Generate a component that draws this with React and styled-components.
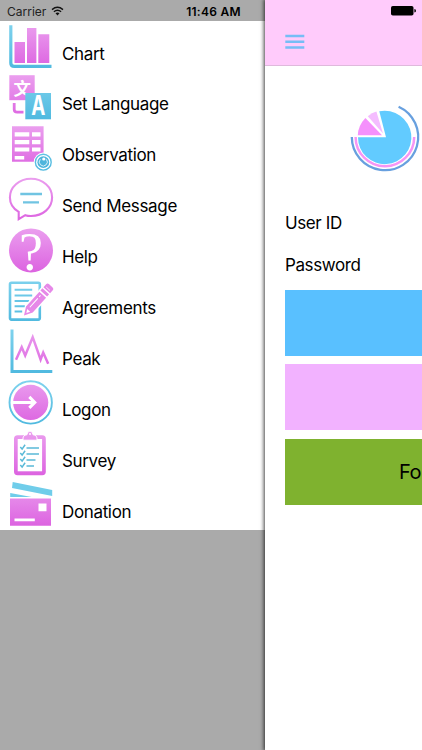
import React from "react";
import styled, { createGlobalStyle } from "styled-components";

const GlobalStyle = createGlobalStyle`
  body {
    margin: 0;
    background: #aaa;
    overflow: hidden;
  }
`;

const Screen = styled.div`
  display: flex;
  width: 422px;
  height: 750px;
  overflow: hidden;
  background: #aaa;
  color: #000;
  font-family: Inter, "Liberation Sans", sans-serif;
`;

const Drawer = styled.aside`
  flex: 0 0 265px;
`;

const StatusBar = styled.div`
  display: flex;
  align-items: center;
  box-sizing: border-box;
  height: 21px;
  padding: 1px 24px 0 7px;
  font-size: 12px;
`;

const Carrier = styled.span`
  color: #222;
  margin-right: 5px;
`;

const Clock = styled.span`
  margin-left: auto;
  font-weight: 600;
  letter-spacing: 0.3px;
`;

const Menu = styled.ul`
  list-style: none;
  margin: 0;
  padding: 0;
  background: #fff;
`;

const MenuItem = styled.li`
  display: flex;
  height: 50.9px;
`;

const MenuIcon = styled.svg`
  flex: none;
  width: 62px;
  height: 50.9px;
  overflow: visible;
`;

const MenuLabel = styled.span`
  padding-top: 21.5px;
  font-size: 17px;
  letter-spacing: -0.35px;
  line-height: 22px;
  white-space: nowrap;
`;

const Page = styled.main`
  flex: 0 0 422px;
  background: #fff;
  box-shadow: 0 0 4px 1px rgba(0, 0, 0, 0.75);
`;

const Header = styled.header`
  display: flex;
  justify-content: space-between;
  box-sizing: border-box;
  height: 66px;
  padding: 6px 271px 0 20px;
  background: #ffcbfb;
  border-bottom: 1px solid #dfb9dc;
`;

const Burger = styled.svg`
  width: 20px;
  height: 16px;
  margin-top: 28px;
`;

const Content = styled.div`
  padding: 34px 20px 0;
`;

const Logo = styled.svg`
  display: block;
  width: 80px;
  height: 76px;
  margin-left: 60px;
`;

const Field = styled.div`
  height: 41.5px;
  font-size: 17px;
  letter-spacing: -0.4px;
  line-height: 22px;
`;

const Form = styled.div`
  padding-top: 36px;
`;

const Buttons = styled.div`
  display: grid;
  gap: 8.3px;
  margin-top: -5px;
`;

const Button = styled.button`
  height: 66px;
  padding: 0 0 0 114px;
  border: 0;
  background: ${(props) => props.$color};
  color: #000;
  font-family: inherit;
  font-size: 20px;
  letter-spacing: -0.4px;
  text-align: left;
`;

const Defs = styled.svg`
  position: absolute;
  width: 0;
  height: 0;
`;

const PINK = "url(#pink)";
const BLUE = "url(#blue)";

const Gradients = () => (
  <Defs>
    <defs>
      <linearGradient id="pink" gradientUnits="userSpaceOnUse" x1="0" y1="2" x2="0" y2="48">
        <stop offset="0" stopColor="#eba0ef" />
        <stop offset="1" stopColor="#dc62e0" />
      </linearGradient>
      <linearGradient id="blue" gradientUnits="userSpaceOnUse" x1="0" y1="2" x2="0" y2="48">
        <stop offset="0" stopColor="#80d3ee" />
        <stop offset="1" stopColor="#4fb9df" />
      </linearGradient>
    </defs>
  </Defs>
);

const ChartIcon = () => (
  <>
    <path d="M10.8 4.2V42q0 3.4 3.4 3.4H51.5" fill="none" stroke={BLUE} strokeWidth="3.2" />
    <path d="M14.5 21H25v21H14.5zM27 7h9.4v35H27zM38.3 13.3h11V42h-11z" fill={PINK} />
  </>
);

const LanguageIcon = () => (
  <>
    <path d="M9.3 3.2h25.4v25H9.3z" fill={PINK} />
    <text x="13.5" y="23" fontSize="17.5" fontWeight="700" fontFamily="Noto Sans CJK SC, sans-serif" fill="#fff">文</text>
    <path d="M14.2 31v6.5q0 2.7 3 2.7h6.3" fill="none" stroke={PINK} strokeWidth="2.8" />
    <path d="M25.3 21H51v26.3H25.3z" fill={BLUE} />
    <text transform="translate(38.2 43.3) scale(.7 1)" fontSize="27" fontWeight="700" textAnchor="middle" fill="#fff">A</text>
  </>
);

const ObservationIcon = () => (
  <>
    <path d="M12 3.2h31.6v35.6H12z" fill={PINK} />
    <path
      d="M14.7 9.3h14.6v4.2H14.7zM32 9.3h8.5v4.2H32zM14.7 17h14.6v4.2H14.7zM32 17h8.5v4.2H32zM14.7 24.4h14.6v4.2H14.7zM32 24.4h8.5v4.2H32zM14.7 33h9.5v3.5h-9.5z"
      fill="#fff"
    />
    <circle cx="43.3" cy="39.2" r="9.6" fill="#fff" />
    <circle cx="43.3" cy="39.2" r="7.9" fill="#fff" stroke={BLUE} strokeWidth="1.4" />
    <circle cx="43.3" cy="39.2" r="5.9" fill="#4fb5dc" />
    <path d="M40.3 36.3a4 4 0 1 0 6 0" fill="none" stroke="#fff" strokeWidth=".8" />
    <circle cx="43.8" cy="36" r="1.6" fill="#fff" />
  </>
);

const MessageIcon = () => (
  <>
    <path
      d="M18.7 45.2V37.8C12.7 34.3 9.9 29 9.9 23.4 9.9 13 19 4.8 31 4.8s21.1 8.2 21.1 18.6S43 42 31 42c-2.5 0-4.2-.3-5.7-.8z"
      fill="none"
      stroke={PINK}
      strokeWidth="2.1"
    />
    <path d="M20.3 20H42M23 28.4h16" stroke="#70c4e2" strokeWidth="2.3" />
  </>
);

const HelpIcon = () => (
  <>
    <circle cx="31" cy="25.4" r="22" fill={PINK} />
    <text x="31" y="44.5" fontSize="54" fontFamily="Liberation Serif, serif" textAnchor="middle" fill="#fff">?</text>
  </>
);

const AgreementsIcon = () => (
  <>
    <rect x="10" y="7.8" width="29.8" height="36.8" rx="1.5" fill="none" stroke={BLUE} strokeWidth="2.6" />
    <path d="M14.6 14.8h17.6M14.6 20.5h17.6M14.6 25.9h14.6M14.6 31.2H25M14.6 36.5h7.6" stroke={BLUE} strokeWidth="2" />
    <g transform="translate(24 40.5) rotate(-48)">
      <path d="M-2 0 8-6h34V6H8z" fill="#fff" />
      <path d="M0 0 8-4.5h20v9H8zM29.5-4.5h3v9h-3zM34-4.5h4q2 0 2 2v5q0 2-2 2h-4z" fill="#e688e8" />
      <path d="M10-1.2h12M24-1.2h2" stroke="#fff" strokeWidth="1" />
      <path d="M36-2.5v5" stroke="#fff" strokeWidth=".7" />
      <path d="m3.500 0 3.500-2v4z" fill="#fff" />
    </g>
  </>
);

const PeakIcon = () => (
  <>
    <path d="M12 3.4v42.1h40.3" fill="none" stroke={BLUE} strokeWidth="3" />
    <path d="m16 33.8 5.7-12.6 3.5 8.4 7.5-18.4 7.9 22.3 2.6-7 5 11.3" fill="none" stroke={PINK} strokeWidth="2.5" />
  </>
);

const LogonIcon = () => (
  <>
    <circle cx="30.7" cy="25.4" r="21.2" fill="none" stroke={BLUE} strokeWidth="1.9" />
    <circle cx="30.7" cy="25.4" r="17.6" fill={PINK} />
    <path d="M12.5 25.4h22M29.3 19.9l5.5 5.5-5.5 5.5" fill="none" stroke="#fff" strokeWidth="3" />
  </>
);

const SurveyIcon = () => (
  <>
    <rect x="14" y="7.2" width="31.8" height="40" rx="3.5" fill={PINK} />
    <path d="M17.7 11h24.4v32.3H17.7z" fill="#fff" />
    <path d="M23 12.2q-.6-5.2 4-5.5.3-3.6 3-3.6t3 3.6q4.6.3 4 5.5z" fill={PINK} stroke="#fff" strokeWidth="1" />
    <circle cx="30" cy="5.9" r="1" fill="#fff" />
    {[12.5, 12.5, 9, 7.5].map((width, i) => (
      <path
        key={i}
        d={`M20.3 ${19.1 + i * 6}l1.8 2 3-4.3M26.5 ${19.9 + i * 6}h${width}`}
        fill="none"
        stroke="#59b9d8"
        strokeWidth="1.5"
      />
    ))}
  </>
);

const DonationIcon = () => (
  <>
    <path d="m12.7 3 39.5 8v6L12 8.9zM10.2 13.9l21.5 4H10.2z" fill="#70cdea" />
    <path d="M10 19.6h41v27.2H10z" fill={PINK} />
    <path d="M38.5 24.4h8v7.8h-8zM14.5 39.6h20.3v2.7H14.5z" fill="#fff" />
  </>
);

const items = [
  { label: "Chart", Icon: ChartIcon },
  { label: "Set Language", Icon: LanguageIcon },
  { label: "Observation", Icon: ObservationIcon },
  { label: "Send Message", Icon: MessageIcon },
  { label: "Help", Icon: HelpIcon },
  { label: "Agreements", Icon: AgreementsIcon },
  { label: "Peak", Icon: PeakIcon },
  { label: "Logon", Icon: LogonIcon },
  { label: "Survey", Icon: SurveyIcon },
  { label: "Donation", Icon: DonationIcon },
];

const Wifi = () => (
  <svg width="13" height="10" viewBox="0 0 13 10">
    <path d="M1 3.6q5.5-4.6 11 0M2.9 5.7q3.6-3 7.2 0" fill="none" stroke="#111" strokeWidth="1.4" />
    <path d="M4.5 7.3q2-1.5 4 0l-2 2.3z" fill="#111" />
  </svg>
);

const Battery = () => (
  <svg width="25" height="10" viewBox="0 0 25 10">
    <rect width="22.5" height="9.6" rx="1.8" />
    <path d="M23.4 3q1.6.3 1.6 1.8t-1.6 1.8z" />
  </svg>
);

const App = () => {
  return (
    <Screen>
      <GlobalStyle />
      <Gradients />
      <Drawer>
        <StatusBar>
          <Carrier>Carrier</Carrier>
          <Wifi />
          <Clock>11:46 AM</Clock>
        </StatusBar>
        <Menu>
          {items.map(({ label, Icon }) => (
            <MenuItem key={label}>
              <MenuIcon viewBox="0 0 62 50.9">
                <Icon />
              </MenuIcon>
              <MenuLabel>{label}</MenuLabel>
            </MenuItem>
          ))}
        </Menu>
      </Drawer>
      <Page>
        <Header>
          <Burger viewBox="0 0 20 16">
            <path d="M.3 2h19M.3 7.7h19M.3 13.4h19" stroke="#76bdf6" strokeWidth="2.5" />
          </Burger>
          <Battery />
        </Header>
        <Content>
          <Logo viewBox="345 100 80 76">
            <path d="M386 137.3 379.3 111.3A26.7 26.7 0 1 1 358 137.3z" fill="#62cbff" />
            <path d="M382 135.2H357.8q.3-9.8 7.6-17.3z" fill="#f590fc" />
            <path d="M383 133.5 367.8 116.3q4-3.5 8.6-4.7z" fill="#f4bcff" />
            <path d="M414.2 137a29.3 29.3 0 0 1-58.6 0" fill="none" stroke="#f595f5" strokeWidth="2.5" />
            <path d="M398.6 106.7A33.2 33.2 0 1 1 351.8 137" fill="none" stroke="#68a0df" strokeWidth="2.3" />
          </Logo>
          <Form>
            <Field>User ID</Field>
            <Field>Password</Field>
          </Form>
          <Buttons>
            <Button $color="#59c0ff" />
            <Button $color="#f2b2ff" />
            <Button $color="#7fb22f">Fo</Button>
          </Buttons>
        </Content>
      </Page>
    </Screen>
  );
};

export default App;
